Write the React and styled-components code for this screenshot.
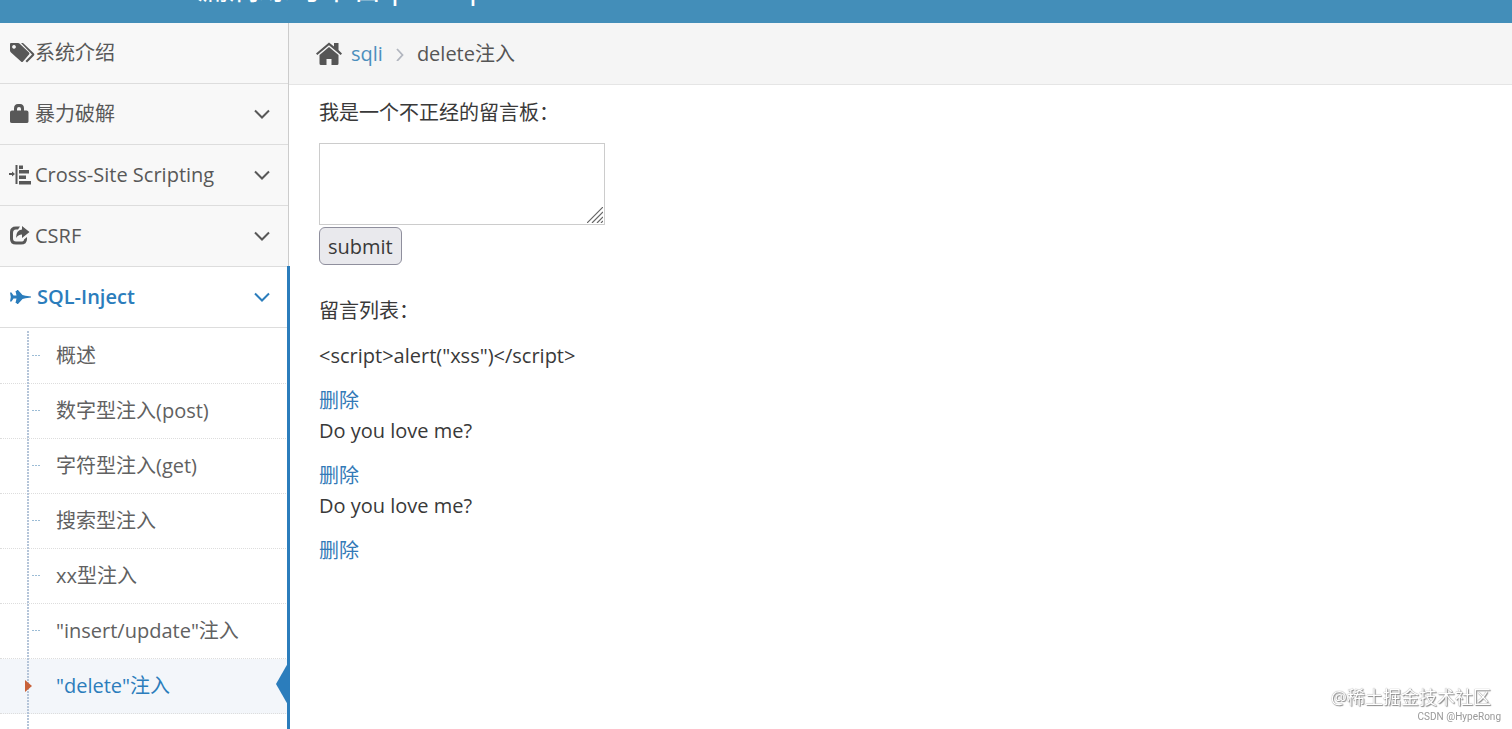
import React, { useState } from 'react';
import styled, { createGlobalStyle } from 'styled-components';

const menu = [
  { label: '系统介绍', icon: 'tags' },
  { label: '暴力破解', icon: 'lock', expandable: true },
  { label: 'Cross-Site Scripting', icon: 'script', expandable: true },
  { label: 'CSRF', icon: 'share', expandable: true },
  { label: 'SQL-Inject', icon: 'plane', expandable: true, active: true },
];

const submenu = [
  '概述',
  '数字型注入(post)',
  '字符型注入(get)',
  '搜索型注入',
  'xx型注入',
  '"insert/update"注入',
  '"delete"注入',
];

const messages = [
  { id: 1, text: '<script>alert("xss")</script>' },
  { id: 2, text: 'Do you love me?' },
  { id: 3, text: 'Do you love me?' },
];

const MenuIcon = ({ name }) => {
  switch (name) {
    case 'tags':
      return (
        <Icon $w={26} $h={22} viewBox="0 0 26 22">
          <path fillRule="evenodd" d="M1 2Q1 1 2 1H9Q10 1 11 2L20 10.500Q21 11.500 20 12.500L14 19.500Q13 20.500 12 19.500L2 10.500Q1 9.500 1 8.500ZM5 3a1.900 1.900 0 1 0 .01 0Z" />
          <path d="M12 1h2L25 11.500q.8 1 0 2L18 20.500l-1.500-1.500 6.500-6.500Z" />
        </Icon>
      );
    case 'lock':
      return (
        <Icon $w={22} $h={22} viewBox="0 0 22 22">
          <path fillRule="evenodd" d="M5 7.500V5.500Q5 1 9 1h2Q15 1 15 5.500V7.500h2.500q2 0 2 2v9q0 1.500-2 1.500H3q-2 0-2-1.500v-9q0-2 2-2ZM8 7.500h4V6q0-2-2-2T8 6Z" />
        </Icon>
      );
    case 'script':
      return (
        <Icon $w={22} $h={22} viewBox="0 0 22 22">
          <path d="M0 9h3V7.500l3 2.500-3 2.500V11H0ZM6.500 1h2v19h-2ZM10 1.500h4v3.500h-4ZM10 6h10v3.500H10ZM10 11.500h7v3.500h-7ZM10 17h12v3.500H10Z" />
        </Icon>
      );
    case 'share':
      return (
        <Icon $w={22} $h={22} viewBox="0 0 22 22">
          <path d="M11 1.500H7Q1 1.500 1 7v7q0 5.500 6 5.500h5q6 0 6-5.500v-2l-3 2.500q0 2-3 2H7q-3 0-3-3V8q0-3.500 3-3.500h2Z" />
          <path d="M13 1l7.500 6-7.500 6V9.500Q9 9.500 7 13q0-8 6-8.500Z" />
        </Icon>
      );
    default:
      return (
        <Icon $w={24} $h={22} viewBox="0 0 24 22">
          <path d="M1 6.500h1.500l2 3h3L6.500 5h1L8 4h1l4.500 5 3 .8L22 10.500v1l-5.500.700-3 .8L9 18H8l-.5-1h-1l1-4.500h-3l-2 3H1l.8-4.500Z" />
        </Icon>
      );
  }
};

const Chevron = () => (
  <Icon $w={16} $h={10} viewBox="0 0 16 10">
    <path d="M1 1.500 8 8.500 15 1.500" fill="none" stroke="currentColor" strokeWidth="2" />
  </Icon>
);

const App = () => {
  const [message, setMessage] = useState('');

  return (
    <>
      <GlobalStyle />
      <Navbar>
        <Brand href="#">
          <Icon $w={28} $h={28} viewBox="0 0 28 28">
            <path fillRule="evenodd" d="M10 3a8 8 0 0 1 7 11l9 9v4h-5v-3h-3v-3l-4-3A8 8 0 1 1 10 3ZM8 6a3 3 0 1 0 .01 0Z" />
          </Icon>
          Pikachu 漏洞练习平台 pika~pika~
        </Brand>
      </Navbar>
      <Container>
        <Sidebar>
          {menu.map((item) => (
            <MenuItem key={item.label} $active={item.active}>
              <MenuLink href="#" $active={item.active}>
                <MenuIcon name={item.icon} />
                <MenuText $tight={!item.expandable}>{item.label}</MenuText>
                {item.expandable && <Chevron />}
              </MenuLink>
              {item.active && (
                <Submenu>
                  {submenu.map((name, i) => (
                    <SubItem key={name} $current={i === submenu.length - 1}>
                      <SubLink href="#" $current={i === submenu.length - 1}>{name}</SubLink>
                    </SubItem>
                  ))}
                </Submenu>
              )}
            </MenuItem>
          ))}
        </Sidebar>

        <Main>
          <Breadcrumbs>
            <Icon $w={26} $h={24} viewBox="0 0 26 24">
              <path d="M13 5 22.500 13v8.500q0 1.500-1.500 1.500H15.500v-6h-5v6H5Q3.500 23 3.500 21.500V13Z" />
              <path d="M13 .5 18 4.500V1h4.500V8L26 11.500l-1.300 1.500L13 3.300 1.300 13 0 11.500Z" />
            </Icon>
            <CrumbLink href="#">sqli</CrumbLink>
            <Icon $w={8} $h={14} viewBox="0 0 8 14">
              <path d="M1 2 6.500 8 1 14" fill="none" stroke="#b2b6bf" strokeWidth="1.800" />
            </Icon>
            <span>delete注入</span>
          </Breadcrumbs>

          <Content>
            <form onSubmit={(e) => e.preventDefault()}>
              <FormLabel htmlFor="message">我是一个不正经的留言板：</FormLabel>
              <TextBox>
                <TextArea
                  id="message"
                  value={message}
                  onChange={(e) => setMessage(e.target.value)}
                />
                <Grip viewBox="0 0 16 16">
                  <path d="M0 16 16 0M5 16 16 5M10 16l6-6M14 16l2-2" fill="none" stroke="#666" strokeWidth="1.200" />
                </Grip>
              </TextBox>
              <Submit type="submit">submit</Submit>
            </form>

            <Messages>
              <Text>留言列表：</Text>
              {messages.map((item) => (
                <div key={item.id}>
                  <Text>{item.text}</Text>
                  <DeleteLink href="#">删除</DeleteLink>
                </div>
              ))}
            </Messages>
          </Content>
        </Main>
      </Container>
      <Watermark>
        <Community>@稀土掘金技术社区</Community>
        <Author>CSDN @HypeRong</Author>
      </Watermark>
    </>
  );
};

const GlobalStyle = createGlobalStyle`
  * {
    box-sizing: border-box;
  }
  body {
    margin: 0;
    background: #fff;
    color: #393939;
    font-family: "Open Sans", "Noto Sans CJK SC", sans-serif;
    font-size: 20px;
    line-height: 30px;
    overflow: hidden;
  }
  a {
    text-decoration: none;
  }
`;

const Icon = styled.svg`
  flex: none;
  width: ${({ $w }) => $w}px;
  height: ${({ $h }) => $h}px;
  fill: currentColor;
`;

const Navbar = styled.header`
  display: flex;
  align-items: flex-end;
  height: 23px;
  padding: 0 40px 16px;
  background: #438eb9;
`;

const Brand = styled.a`
  display: flex;
  align-items: center;
  gap: 8px;
  color: #fff;
  font-size: 31px;
  line-height: 40px;
  white-space: nowrap;
`;

const Container = styled.div`
  display: flex;
  height: calc(100vh - 23px);
`;

const Sidebar = styled.nav`
  flex: none;
  width: 289px;
  background: #f8f8f8;
  border-right: 1px solid #ccc;
`;

const MenuItem = styled.div`
  position: relative;
  background: ${({ $active }) => ($active ? '#fff' : '#f8f8f8')};
  ${({ $active }) => $active && `
    height: calc(100vh - 267px);
    &::after {
      content: '';
      position: absolute;
      top: -1px;
      right: -2px;
      bottom: 0;
      width: 3px;
      background: #2b7dbc;
    }
  `}
`;

const MenuLink = styled.a`
  display: flex;
  align-items: center;
  height: 61px;
  padding: 0 18px 0 9px;
  border-bottom: 1px solid #ddd;
  color: ${({ $active }) => ($active ? '#2b7dbc' : '#585858')};
  font-weight: ${({ $active }) => ($active ? 600 : 400)};
`;

const MenuText = styled.span`
  flex: 1;
  padding-left: ${({ $tight }) => ($tight ? 0 : 4)}px;
`;

const Submenu = styled.ul`
  position: relative;
  height: calc(100% - 61px);
  margin: 0;
  padding: 1px 0 0;
  list-style: none;
  &::before {
    content: '';
    position: absolute;
    top: 3px;
    bottom: 0;
    left: 27px;
    z-index: 1;
    width: 2px;
    background: repeating-linear-gradient(#b5c5d9 0 2px, transparent 2px 3px);
  }
`;

const SubItem = styled.li`
  position: relative;
  height: 55px;
  border-bottom: 1px dotted #ddd;
  background: ${({ $current }) => ($current ? '#f3f6fa' : '#fff')};
  &::before {
    content: '';
    position: absolute;
    z-index: 2;
    top: 26px;
    left: 32px;
    width: 8px;
    height: 1px;
    background: repeating-linear-gradient(90deg, #9dbdd6 0 2px, transparent 2px 3px);
    ${({ $current }) => $current && `
      top: 21px;
      left: 25px;
      width: 7px;
      height: 12px;
      background: #c86139;
      clip-path: polygon(0 0, 100% 50%, 0 100%);
    `}
  }
  ${({ $current }) => $current && `
    &::after {
      content: '';
      position: absolute;
      top: 4px;
      right: 0;
      width: 12px;
      height: 42px;
      background: #2b7dbc;
      clip-path: polygon(100% 0, 0 50%, 100% 100%);
    }
  `}
`;

const SubLink = styled.a`
  display: block;
  padding: 12px 0 12px 56px;
  color: ${({ $current }) => ($current ? '#2b7dbc' : '#616161')};
`;

const Main = styled.main`
  flex: 1;
`;

const Breadcrumbs = styled.div`
  display: flex;
  align-items: center;
  height: 62px;
  padding: 0 27px;
  background: #f5f5f5;
  border-bottom: 1px solid #e5e5e5;
  color: #555;
  gap: 13px;
`;

const CrumbLink = styled.a`
  margin-left: -4px;
  color: #4c8fbd;
`;

const Content = styled.div`
  padding: 13px 30px;
`;

const FormLabel = styled.label`
  display: block;
  margin-bottom: 15px;
`;

const TextBox = styled.div`
  position: relative;
  width: 286px;
  margin-bottom: 2px;
`;

const TextArea = styled.textarea`
  display: block;
  width: 100%;
  height: 82px;
  padding: 4px;
  border: 1px solid #ccc;
  font: inherit;
  resize: none;
  outline: none;
`;

const Grip = styled.svg`
  position: absolute;
  right: 2px;
  bottom: 2px;
  width: 16px;
  height: 16px;
`;

const Submit = styled.button`
  display: block;
  height: 38px;
  padding: 2px 8px 0;
  border: 1px solid #8f8f9d;
  border-radius: 6px;
  background: #e9e9ed;
  color: #393939;
  font: inherit;
`;

const Messages = styled.section`
  padding-top: 31px;
`;

const Text = styled.p`
  margin: 0 0 15px;
`;

const DeleteLink = styled.a`
  display: block;
  width: max-content;
  color: #337ab7;
`;

const Watermark = styled.footer`
  position: fixed;
  right: 11px;
  bottom: 5px;
  display: flex;
  flex-direction: column;
  align-items: flex-end;
`;

const Community = styled.span`
  padding-right: 10px;
  color: #fff;
  font-size: 18px;
  line-height: 26px;
  text-shadow: 0 0 1px #777, 1px 1px 1px #888;
`;

const Author = styled.span`
  color: #999;
  font-family: Roboto, sans-serif;
  font-size: 10px;
  line-height: 14px;
`;

export default App;
